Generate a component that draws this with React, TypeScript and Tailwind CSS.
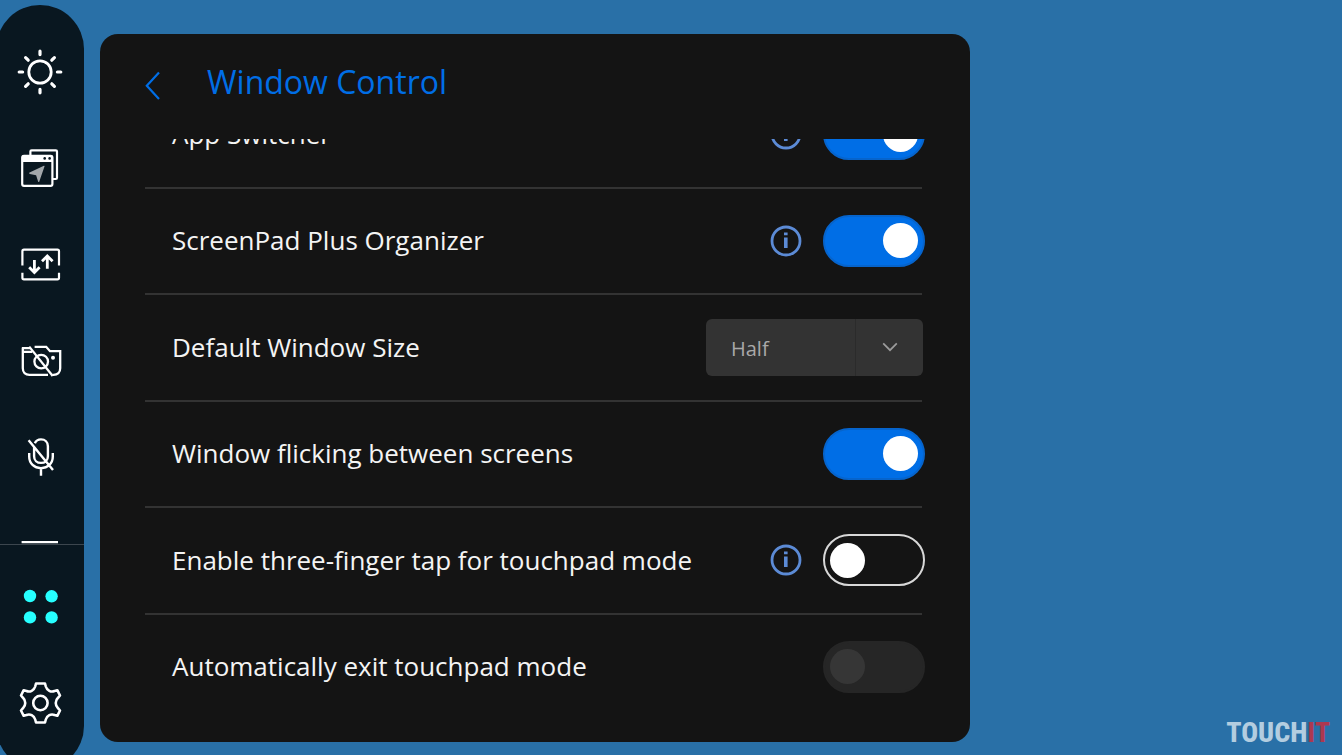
import React, { useState } from "react";

interface IconProps {
  children: React.ReactNode;
}

function Icon({ children }: IconProps) {
  return (
    <svg
      viewBox="0 0 48 48"
      className="size-12"
      fill="none"
      stroke="white"
      strokeWidth="2.2"
      aria-hidden="true"
    >
      {children}
    </svg>
  );
}

function SunIcon() {
  return (
    <Icon>
      <circle cx="24" cy="24" r="11.2" strokeWidth="2.8" />
      <path
        strokeWidth="3.2"
        strokeLinecap="round"
        d="M24 3.2v3.4M24 41.4v3.4M3.2 24h3.4M41.4 24h3.4M9.6 9.6l2.6 2.6M35.8 35.8l2.6 2.6M38.4 9.6l-2.6 2.6M12.2 35.8l-2.6 2.6"
      />
    </Icon>
  );
}

function WindowsIcon() {
  return (
    <Icon>
      <path d="M14.4 11V7.5c0-.7.5-1.2 1.2-1.2h24.2c.7 0 1.2.5 1.2 1.2v26.3c0 .7-.5 1.2-1.2 1.2H37" />
      <rect x="6.2" y="11.8" width="30.2" height="30" rx="1.8" />
      <path d="M6 11.5h30.5V18H6z" fill="white" stroke="none" />
      <circle cx="28.7" cy="14.4" r="1.3" fill="#091720" stroke="none" />
      <circle cx="33.6" cy="14.4" r="1.3" fill="#091720" stroke="none" />
      <path
        d="M27.9 21.8 13.6 28.6c-.7.4-.6 1.1.2 1.3l6.3 1.4 2 6.2c.3.8 1 .8 1.2 0l5.2-15.1c.2-.6-.1-.8-.6-.6Z"
        fill="#a2a7ab"
        stroke="none"
      />
    </Icon>
  );
}

function SwapIcon() {
  return (
    <Icon>
      <path d="M6.4 25.5V11.2c0-1 .6-1.6 1.6-1.6h33.4c1 0 1.6.6 1.6 1.6v14.3M6.4 32.8v5c0 1 .6 1.6 1.6 1.6h33.4c1 0 1.6-.6 1.6-1.6v-5" />
      <path
        strokeWidth="2.8"
        d="M18.4 20v12.4M13.2 27.2l5.2 5.2 5.2-5.2M31.3 28.8V16M26 21.2l5.3-5.2 5.3 5.2"
      />
    </Icon>
  );
}

function CameraOffIcon() {
  return (
    <Icon>
      <path
        strokeWidth="2.3"
        d="M6 12.2h8M6.8 11.5v20.8c0 4 2.6 6.6 6.6 6.6H32M6.8 15.8h9.4M18.6 10.8h11.6l3.8 4.4h10.2v17.1c0 4-2.6 6.6-6.6 6.6h-1.2"
      />
      <circle cx="25.2" cy="25.6" r="6.8" strokeWidth="2.3" />
      <path strokeWidth="2.3" d="M13.2 10.6 36.7 40" />
      <circle cx="37" cy="21.8" r="2" fill="white" stroke="none" />
    </Icon>
  );
}

function MicOffIcon() {
  return (
    <Icon>
      <path
        strokeWidth="2.4"
        d="M18.9 11.2c1-2.4 3.3-3.8 6.1-3.8 4 0 6.9 2.9 6.9 6.9v9.9c0 4-2.9 6.7-6.9 6.7s-6.9-2.7-6.9-6.7v-8.8M13.2 21v3.6c0 6.8 5 11.6 11.8 11.6s11.8-4.8 11.8-11.6V21M25 36.2v7.6M12.6 8.2 37 38"
      />
    </Icon>
  );
}

function KeyboardIcon() {
  return (
    <Icon>
      <path d="M5.6 14.2h36.4M6.6 18v18h34.4V18M12 24h24M16 30h16" />
    </Icon>
  );
}

function DotsIcon() {
  return (
    <Icon>
      <g fill="#26ffff" stroke="none">
        <circle cx="14" cy="14" r="6.2" />
        <circle cx="35.6" cy="14.3" r="6.2" />
        <circle cx="14" cy="35.4" r="6.2" />
        <circle cx="35.6" cy="35.4" r="6.2" />
      </g>
    </Icon>
  );
}

function GearIcon() {
  return (
    <Icon>
      <path
        strokeWidth="2.6"
        strokeLinejoin="round"
        d="M20 4.5H29L29.8 7.5C31 11.5 35 13.5 38.5 12L41.3 11.2 44 16.5 42 18.8C39 21.5 39 26.5 42 29.2L44 31.5 41.3 36.8 38.5 36C35 34.5 31 36.5 29.8 40.5L29 43.5H20L19.2 40.5C18 36.5 14 34.5 10.5 36L7.7 36.8 5 31.5 7 29.2C10 26.5 10 21.5 7 18.8L5 16.5 7.7 11.2 10.5 12C14 13.5 18 11.5 19.2 7.5Z"
      />
      <circle cx="24.4" cy="24" r="7.2" strokeWidth="2.6" />
    </Icon>
  );
}

interface SideButtonProps {
  label: string;
  children: React.ReactNode;
}

function SideButton({ label, children }: SideButtonProps) {
  return (
    <button
      type="button"
      aria-label={label}
      className="flex h-24 w-full shrink-0 items-center justify-center"
    >
      {children}
    </button>
  );
}

function Sidebar() {
  return (
    <nav className="-mb-[15px] -ml-1 mt-[5px] flex w-[88px] shrink-0 flex-col overflow-hidden rounded-full bg-[#091720] pt-[19px]">
      <div className="flex min-h-0 flex-1 flex-col overflow-hidden">
        <SideButton label="Brightness">
          <SunIcon />
        </SideButton>
        <SideButton label="App Navigator">
          <WindowsIcon />
        </SideButton>
        <SideButton label="Swap screens">
          <SwapIcon />
        </SideButton>
        <SideButton label="Camera off">
          <CameraOffIcon />
        </SideButton>
        <SideButton label="Microphone off">
          <MicOffIcon />
        </SideButton>
        <SideButton label="Keyboard">
          <KeyboardIcon />
        </SideButton>
      </div>
      <div className="flex flex-col gap-px border-t border-[#3c464e] pb-[19px] pt-[13px]">
        <SideButton label="All apps">
          <DotsIcon />
        </SideButton>
        <SideButton label="Settings">
          <GearIcon />
        </SideButton>
      </div>
    </nav>
  );
}

function InfoButton({ label }: { label: string }) {
  return (
    <button type="button" aria-label={`About ${label}`} className="size-8">
      <svg viewBox="0 0 32 32" className="size-8" fill="none" aria-hidden="true">
        <circle cx="16" cy="16" r="14" stroke="#5c8bd6" strokeWidth="2.8" />
        <path d="M14 7.6h3.6v2.6H14zM14 12.4h3.6V23H14z" fill="#5c8bd6" />
      </svg>
    </button>
  );
}

interface ToggleProps {
  id: string;
  defaultChecked?: boolean;
  disabled?: boolean;
}

function Toggle({ id, defaultChecked = false, disabled }: ToggleProps) {
  const [checked, setChecked] = useState(defaultChecked);

  return (
    <input
      id={id}
      type="checkbox"
      role="switch"
      checked={checked}
      disabled={disabled}
      onChange={(e) => setChecked(e.target.checked)}
      className="flex h-[52px] w-[102px] shrink-0 appearance-none items-center rounded-full border-2 border-[#d8d8d8] px-[5px] before:size-[35px] before:rounded-full before:bg-white checked:justify-end checked:border-[#0664cc] checked:bg-[#006ee6] disabled:border-[#262626] disabled:bg-[#262626] disabled:before:bg-[#363636]"
    />
  );
}

function SizeSelect({ id }: { id: string }) {
  return (
    <div className="relative mr-[2px] h-[57px] w-[217px] shrink-0">
      <select
        id={id}
        disabled
        defaultValue="half"
        className="size-full appearance-none rounded-md bg-[#333333] pl-[25px] pt-[3px] text-[20px] text-[#a9a9a9] opacity-100"
      >
        <option value="half">Half</option>
        <option value="full">Full</option>
      </select>
      <div className="pointer-events-none absolute inset-y-0 right-0 flex w-[68px] items-center justify-center border-l border-[#2b2b2b]">
        <svg viewBox="0 0 16 10" className="h-[10px] w-4" fill="none" aria-hidden="true">
          <path d="M1.2 1.4 8 8.2l6.8-6.8" stroke="#9c9c9c" strokeWidth="1.7" />
        </svg>
      </div>
    </div>
  );
}

interface Setting {
  id: string;
  name: string;
  info?: boolean;
  on?: boolean;
  disabled?: boolean;
  select?: boolean;
}

const settings: Setting[] = [
  { id: "app-switcher", name: "App Switcher", info: true, on: true },
  { id: "organizer", name: "ScreenPad Plus Organizer", info: true, on: true },
  { id: "window-size", name: "Default Window Size", select: true },
  { id: "flicking", name: "Window flicking between screens", on: true },
  {
    id: "three-finger",
    name: "Enable three-finger tap for touchpad mode",
    info: true,
  },
  { id: "auto-exit", name: "Automatically exit touchpad mode", disabled: true },
];

function SettingRow({ id, name, info, on, disabled, select }: Setting) {
  return (
    <li className="group flex flex-col">
      <div className="flex flex-1 items-center gap-[21px] pl-[27px]">
        <label htmlFor={id} className="flex-1 whitespace-nowrap text-[26px] text-[#f4f4f4]">
          {name}
        </label>
        {info && <InfoButton label={name} />}
        {select ? (
          <SizeSelect id={id} />
        ) : (
          <Toggle id={id} defaultChecked={on} disabled={disabled} />
        )}
      </div>
      <div className="mr-[3px] h-[2px] bg-[#333333] group-last:bg-transparent" />
    </li>
  );
}

export default function App() {
  return (
    <div className="relative flex h-screen gap-4 overflow-hidden bg-[#2970a7] font-['Open_Sans',sans-serif]">
      <Sidebar />

      <main className="mb-[13px] mt-[34px] flex w-full max-w-[870px] flex-col rounded-[18px] bg-[#141414] px-[45px] pb-[21px]">
        <header className="flex h-[105px] shrink-0 items-start gap-[46px] pt-6">
          <button type="button" aria-label="Back" className="pt-[13px]">
            <svg viewBox="0 0 16 30" className="h-[30px] w-4" fill="none" aria-hidden="true">
              <path d="M14 1.6 1.8 14.8 14 28" stroke="#006ee6" strokeWidth="2.2" />
            </svg>
          </button>
          <h1 className="text-[32px] leading-[48px] text-[#006ee6]">Window Control</h1>
        </header>

        {/* Scrolled to the end, so the first row is cut off by the header */}
        <div className="flex min-h-0 flex-1 flex-col justify-end overflow-hidden">
          <ul className="grid h-[639px] shrink-0 auto-rows-fr">
            {settings.map((setting) => (
              <SettingRow key={setting.id} {...setting} />
            ))}
          </ul>
        </div>
      </main>

      {/* Watermark */}
      <div className="absolute bottom-2 right-3 font-['Roboto_Condensed','Roboto',sans-serif] text-[28px] font-extrabold leading-7 text-[#b3cde0]">
        TOUCH<span className="text-[#ac3850]">IT</span>
      </div>
    </div>
  );
}
